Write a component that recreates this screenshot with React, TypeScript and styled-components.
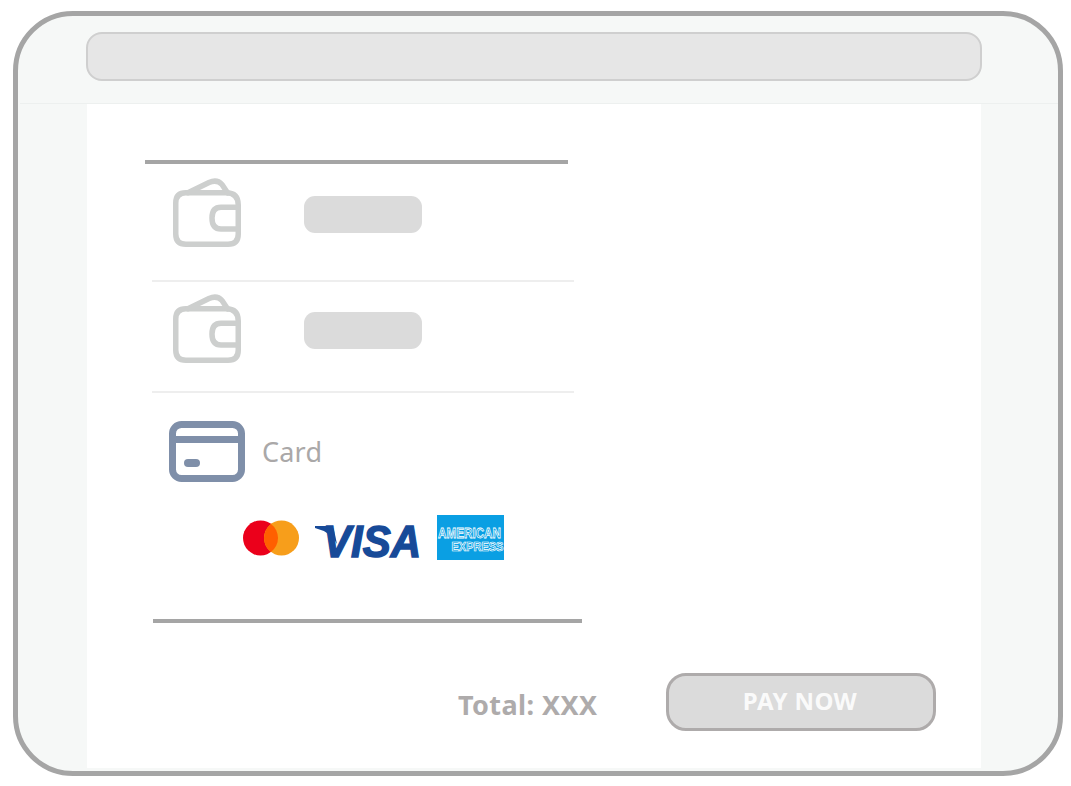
import React from 'react'
import styled, { createGlobalStyle } from 'styled-components'

const GlobalStyle = createGlobalStyle`
  html, body {
    margin: 0;
    background: #fff;
    font-family: "Noto Sans", "Open Sans", sans-serif;
  }
`

function WalletIcon() {
  return (
    <svg width="68" height="69" viewBox="0 0 68 69" fill="none" stroke="#cdcfce" strokeWidth="5.5" strokeLinejoin="round" strokeLinecap="round">
      <path d="M13 14.750 H53 Q65.250 14.750 65.250 27 V56 Q65.250 66.250 55 66.250 H13 Q2.750 66.250 2.750 56 V25 Q2.750 14.750 13 14.750 Z" />
      <path d="M15 14.750 L36 4.500 Q44 1 49 6.500 L54.500 14.750" />
      <path d="M65 29.300 H48 Q39 29.300 39 40 Q39 51 48 51 H65" />
    </svg>
  )
}

function CardIcon() {
  return (
    <svg width="76" height="62" viewBox="0 0 76 62" fill="none">
      <rect x="3.500" y="3.500" width="69" height="54" rx="9" stroke="#7f8fa9" strokeWidth="7" />
      <path d="M3 18.500 H73" stroke="#7f8fa9" strokeWidth="7" />
      <rect x="15" y="38" width="16" height="8" rx="4" fill="#7f8fa9" />
    </svg>
  )
}

function Mastercard() {
  return (
    <svg width="60" height="36" viewBox="0 0 60 36">
      <circle cx="17.500" cy="18" r="17.500" fill="#eb001b" />
      <circle cx="38.500" cy="18" r="17.500" fill="#f79e1b" />
      <path d="M28 4 A17.500 17.500 0 0 1 28 32 A17.500 17.500 0 0 1 28 4 Z" fill="#ff5f00" />
    </svg>
  )
}

function Visa() {
  return (
    <svg width="110" height="58" viewBox="0 0 110 58">
      <path d="M0 17 H14 Q18 17 19 21 L22 35 Q16 23 0 19 Z" fill="#174a98" />
      <text transform="translate(8 47.500) scale(1 1.050)" fontFamily="Liberation Sans, sans-serif" fontWeight="700" fontStyle="italic" fontSize="42" fill="#174a98" stroke="#174a98" strokeWidth="1.400">
        VISA
      </text>
    </svg>
  )
}

function Amex() {
  return (
    <svg width="67" height="45" viewBox="0 0 67 45">
      <rect width="67" height="45" fill="#0a9fe3" />
      <text transform="translate(1 23) scale(1 1.250)" fontFamily="Liberation Sans, sans-serif" fontWeight="700" fontSize="11.700" fill="#0a9fe3" stroke="#fff" strokeWidth="0.600">
        AMERICAN
      </text>
      <text transform="translate(14.500 35.500) scale(1 1.150)" fontFamily="Liberation Sans, sans-serif" fontWeight="700" fontSize="11" fill="#0a9fe3" stroke="#fff" strokeWidth="0.600">
        EXPRESS
      </text>
    </svg>
  )
}

export default function App() {
  return (
    <>
      <GlobalStyle />
      <Page>
        <Frame>
          <TopBar>
            <SearchPill />
          </TopBar>
          <Content>
            <ThickRule $left={58} $width={423} />
            <WalletRow $height={116} $top={14}>
              <WalletIcon />
              <LabelPill />
            </WalletRow>
            <ThinRule />
            <WalletRow $height={109} $top={12}>
              <WalletIcon />
              <LabelPill />
            </WalletRow>
            <ThinRule />
            <CardRow>
              <CardIcon />
              <CardLabel>Card</CardLabel>
            </CardRow>
            <LogoRow>
              <Mastercard />
              <Visa />
              <Amex />
            </LogoRow>
            <ThickRule $left={66} $width={429} />
            <Footer>
              <Total>Total: XXX</Total>
              <PayButton>PAY NOW</PayButton>
            </Footer>
          </Content>
        </Frame>
      </Page>
    </>
  )
}

const Page = styled.div`
  width: 1071px;
  height: 786px;
  padding: 11px 8px 10px 13px;
  box-sizing: border-box;
`

const Frame = styled.div`
  height: 100%;
  box-sizing: border-box;
  border: 5px solid #a5a5a5;
  border-radius: 60px;
  background: #f6f8f7;
  overflow: hidden;
  display: flex;
  flex-direction: column;
`

const TopBar = styled.header`
  height: 88px;
  flex: none;
  box-sizing: border-box;
  margin: 0 0 0 2px;
  padding: 16px 76px 0 66px;
  border-bottom: 1px solid #edf0ef;
`

const SearchPill = styled.div`
  height: 49px;
  box-sizing: border-box;
  background: #e6e6e6;
  border: 2px solid #cfcfcf;
  border-radius: 16px;
`

const Content = styled.main`
  flex: 1;
  width: 894px;
  margin: 0 0 3px 69px;
  padding-top: 56px;
  box-sizing: border-box;
  background: #fff;
  display: flex;
  flex-direction: column;
`

const ThickRule = styled.div<{ $left: number; $width: number }>`
  height: 4px;
  flex: none;
  margin-left: ${p => p.$left}px;
  width: ${p => p.$width}px;
  background: #a5a5a5;
`

const ThinRule = styled.div`
  height: 2px;
  flex: none;
  width: 422px;
  margin-left: 65px;
  background: #eeeeee;
`

const WalletRow = styled.div<{ $height: number; $top: number }>`
  height: ${p => p.$height}px;
  flex: none;
  box-sizing: border-box;
  padding: ${p => p.$top}px 0 0 86px;
  display: flex;
  align-items: flex-start;
  gap: 63px;

  svg {
    flex: none;
  }
`

const LabelPill = styled.div`
  width: 118px;
  height: 37px;
  margin-top: 18px;
  background: #dbdbdb;
  border-radius: 11px;
`

const CardRow = styled.div`
  display: flex;
  align-items: center;
  gap: 17px;
  padding: 28px 0 0 82px;
`

const CardLabel = styled.span`
  font-size: 27px;
  line-height: 36px;
  letter-spacing: 0.2px;
  color: #aaa8a8;
`

const LogoRow = styled.div`
  display: flex;
  align-items: center;
  gap: 12px;
  height: 45px;
  margin: 32px 0 59px 156px;
`

const Footer = styled.div`
  display: flex;
  align-items: flex-start;
  margin-top: 50px;
  padding-left: 371px;
`

const Total = styled.div`
  width: 208px;
  margin-top: 13px;
  font-size: 27px;
  line-height: 38px;
  font-weight: 700;
  letter-spacing: 0.4px;
  color: #aeabab;
`

const PayButton = styled.button`
  width: 270px;
  height: 58px;
  padding: 0 2px 4px 0;
  box-sizing: border-box;
  border: 3px solid #aeabab;
  border-radius: 20px;
  background: #dbdbdb;
  font-family: inherit;
  font-size: 24px;
  font-weight: 700;
  letter-spacing: 0.4px;
  color: #fafafa;
`
